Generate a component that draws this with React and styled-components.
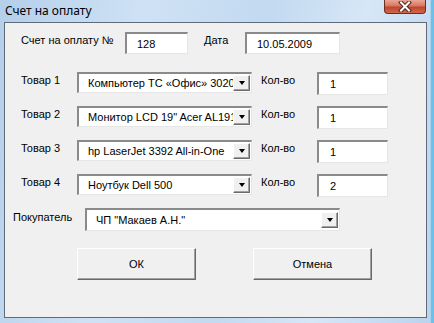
import React from 'react';
import styled, { createGlobalStyle } from 'styled-components';

const GlobalStyle = createGlobalStyle`
  html, body {
    margin: 0;
    padding: 0;
    background: #bcd4ec;
  }
`;

const Window = styled.div`
  width: 434px;
  height: 323px;
  display: flex;
  flex-direction: column;
  box-sizing: border-box;
  background: linear-gradient(100deg, #b4cfea 0%, #cfe2f5 30%, #c2d9f0 55%, #d6e7f7 75%, #b9d3ee 100%);
  box-shadow: inset -3px 0 0 #6cc0ea, inset -4px 0 0 #a9d4ef;
`;

const TitleBar = styled.div`
  height: 22px;
  display: flex;
  align-items: flex-start;
  flex-shrink: 0;
`;

const Title = styled.div`
  font-family: "Noto Sans", "Liberation Sans", sans-serif;
  font-size: 12px;
  color: #000;
  padding: 3px 0 0 5px;
  line-height: 16px;
  flex: 1;
`;

const CloseButton = styled.div`
  width: 42px;
  height: 14px;
  margin-right: 8px;
  box-sizing: border-box;
  border: 1px solid #6b2c22;
  border-top: none;
  border-radius: 0 0 4px 4px;
  background: linear-gradient(#e9a797 0%, #d9765f 45%, #c4442b 55%, #d0664e 100%);
  display: flex;
  align-items: center;
  justify-content: center;
`;

const Client = styled.div`
  flex: 1;
  margin: 0 7px 5px 4px;
  border: 1px solid #5f6b78;
  background: #f0f0f0;
  display: flex;
  flex-direction: column;
  padding: 9px 0 0 0;
  font-family: "Liberation Sans", Arial, sans-serif;
  font-size: 11px;
  color: #000;
`;

const Row = styled.div`
  display: flex;
  align-items: flex-start;
  margin-left: ${(p) => p.$indent}px;
  margin-top: ${(p) => p.$top || 0}px;
`;

const Label = styled.div`
  width: ${(p) => p.$w}px;
  line-height: 14px;
  padding-top: ${(p) => p.$pt || 0}px;
  white-space: nowrap;
  flex-shrink: 0;
`;

const sunken = `
  box-sizing: border-box;
  background: #fff;
  border-top: 2px solid #8a8a8a;
  border-left: 2px solid #8a8a8a;
  border-bottom: 1px solid #e6e6e6;
  border-right: 1px solid #e6e6e6;
`;

const TextBox = styled.div`
  ${sunken}
  width: ${(p) => p.$w}px;
  height: ${(p) => p.$h || 22}px;
  padding-left: ${(p) => p.$pad || 10}px;
  display: flex;
  align-items: center;
  flex-shrink: 0;
  white-space: nowrap;
`;

const Combo = styled.div`
  ${sunken}
  width: ${(p) => p.$w}px;
  height: 21px;
  display: flex;
  align-items: center;
  flex-shrink: 0;
  padding-right: 1px;
`;

const ComboText = styled.div`
  flex: 1;
  overflow: hidden;
  white-space: nowrap;
  padding-left: 9px;
`;

const DropButton = styled.div`
  width: 17px;
  height: 16px;
  box-sizing: border-box;
  background: #f0f0f0;
  border-top: 1px solid #fff;
  border-left: 1px solid #fff;
  border-right: 1px solid #6a6a6a;
  border-bottom: 1px solid #6a6a6a;
  box-shadow: inset -1px -1px 0 #a0a0a0;
  display: flex;
  align-items: center;
  justify-content: center;
  flex-shrink: 0;
  &::after {
    content: '';
    width: 0;
    height: 0;
    border-left: 3.5px solid transparent;
    border-right: 3.5px solid transparent;
    border-top: 4px solid #000;
  }
`;

const Buttons = styled.div`
  display: flex;
  gap: 57px;
  margin: 17px 0 0 72px;
`;

const Button = styled.div`
  width: 119px;
  height: 32px;
  box-sizing: border-box;
  background: #f0f0f0;
  border-top: 1px solid #fff;
  border-left: 1px solid #fff;
  border-right: 1px solid #696969;
  border-bottom: 1px solid #696969;
  box-shadow: inset -1px -1px 0 #a0a0a0;
  display: flex;
  align-items: center;
  justify-content: center;
`;

const items = [
  { n: 1, name: 'Компьютер ТС «Офис» 30208', qty: '1' },
  { n: 2, name: 'Монитор LCD 19" Acer AL1917', qty: '1' },
  { n: 3, name: 'hp LaserJet 3392 All-in-One', qty: '1' },
  { n: 4, name: 'Ноутбук Dell 500', qty: '2' },
];

const CloseIcon = () => (
  <svg width="14" height="11" viewBox="0 0 14 11">
    <path d="M3 1.5 L11 9.5 M11 1.5 L3 9.5" stroke="#4a2a26" strokeWidth="4" strokeLinecap="square" />
    <path d="M3 1.5 L11 9.5 M11 1.5 L3 9.5" stroke="#fff" strokeWidth="2" strokeLinecap="square" />
  </svg>
);

export default function App() {
  return (
    <Window>
      <GlobalStyle />
      <TitleBar>
        <Title>Счет на оплату</Title>
        <CloseButton>
          <CloseIcon />
        </CloseButton>
      </TitleBar>
      <Client>
        <Row $indent={16}>
          <Label $w={104} $pt={1}>Счет на оплату №</Label>
          <TextBox $w={63}>128</TextBox>
          <Label $w={41} $pt={1} style={{ marginLeft: 16 }}>Дата</Label>
          <TextBox $w={95}>10.05.2009</TextBox>
        </Row>
        {items.map((it, i) => (
          <Row key={it.n} $indent={16} $top={i === 0 ? 18 : 11}>
            <Label $w={56} $pt={1}>Товар {it.n}</Label>
            <Combo $w={175}>
              <ComboText>{it.name}</ComboText>
              <DropButton />
            </Combo>
            <Label $w={56} $pt={1} style={{ marginLeft: 9 }}>Кол-во</Label>
            <TextBox $w={71} $h={23} $pad={11}>{it.qty}</TextBox>
          </Row>
        ))}
        <Row $indent={8} $top={11}>
          <Label $w={72} $pt={2}>Покупатель</Label>
          <Combo $w={255} style={{ height: 23 }}>
            <ComboText>ЧП "Макаев А.Н."</ComboText>
            <DropButton />
          </Combo>
        </Row>
        <Buttons>
          <Button>ОК</Button>
          <Button>Отмена</Button>
        </Buttons>
      </Client>
    </Window>
  );
}
